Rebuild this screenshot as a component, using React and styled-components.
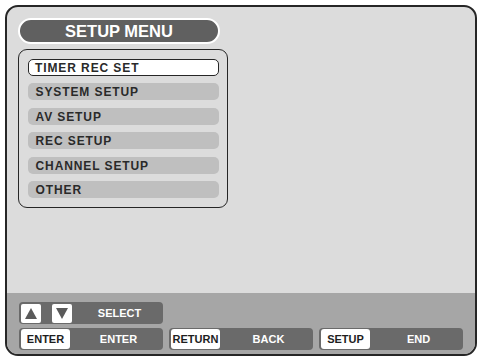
import React from "react";
import styled, { createGlobalStyle } from "styled-components";

const GlobalStyle = createGlobalStyle`
  html, body {
    margin: 0;
    padding: 0;
    background: #ffffff;
    font-family: "Liberation Sans", Arial, sans-serif;
  }
`;

const Screen = styled.div`
  box-sizing: border-box;
  margin: 5px 0 0 5px;
  width: 472px;
  height: 351px;
  border: 2px solid #262626;
  border-radius: 13px;
  background: #dcdcdc;
  display: flex;
  flex-direction: column;
  overflow: hidden;
`;

const Main = styled.div`
  flex: 1;
  padding: 11px;
  display: flex;
  flex-direction: column;
  align-items: flex-start;
`;

const TitlePill = styled.div`
  box-sizing: border-box;
  width: 202px;
  height: 26px;
  border: 2px solid #ffffff;
  border-radius: 13px;
  background: #606060;
  color: #ffffff;
  font-weight: bold;
  font-size: 16.5px;
  display: flex;
  align-items: center;
  justify-content: center;
`;

const MenuBox = styled.div`
  box-sizing: border-box;
  margin-top: 5px;
  width: 210px;
  height: 159px;
  border: 1.5px solid #262626;
  border-radius: 9px;
  padding: 8.5px 8.5px 0 8.5px;
  display: flex;
  flex-direction: column;
  gap: 7.5px;
`;

const Item = styled.div`
  box-sizing: border-box;
  height: 17px;
  border-radius: 5px;
  background: ${(p) => (p.$active ? "#ffffff" : "#bfbfbf")};
  border: ${(p) => (p.$active ? "1.5px solid #262626" : "none")};
  padding-left: ${(p) => (p.$active ? "6.5px" : "8px")};
  padding-top: 1px;
  color: #2a2a2a;
  font-weight: bold;
  font-size: 12px;
  letter-spacing: 0.9px;
  display: flex;
  align-items: center;
`;

const Band = styled.div`
  height: 61px;
  box-sizing: border-box;
  background: #a6a6a6;
  padding: 9px 12px 0 12px;
  display: flex;
  flex-direction: column;
  gap: 4px;
`;

const Row = styled.div`
  display: flex;
  gap: 6px;
`;

const Group = styled.div`
  box-sizing: border-box;
  width: 144px;
  height: 22px;
  border-radius: 4px;
  background: #6a6a6a;
  padding: 1px 2px;
  display: flex;
  align-items: center;
`;

const KeyBox = styled.div`
  box-sizing: border-box;
  width: 49px;
  height: 20px;
  border-radius: 3px;
  background: #ffffff;
  color: #1e1e1e;
  font-weight: bold;
  font-size: 11px;
  display: flex;
  align-items: center;
  justify-content: center;
`;

const ArrowKey = styled.div`
  width: 20px;
  height: 19px;
  border-radius: 2px;
  background: #ffffff;
  display: flex;
  align-items: center;
  justify-content: center;
  margin-right: ${(p) => p.$gap || 0}px;
`;

const Label = styled.div`
  flex: 1;
  padding-left: 6px;
  text-align: center;
  color: #ffffff;
  font-weight: bold;
  font-size: 11px;
`;

function Triangle({ down }) {
  return (
    <svg width="12" height="11" viewBox="0 0 12 11">
      <polygon
        points={down ? "0,0 12,0 6,11" : "6,0 12,11 0,11"}
        fill="#5a5a5a"
      />
    </svg>
  );
}

const items = [
  "TIMER REC SET",
  "SYSTEM SETUP",
  "AV SETUP",
  "REC SETUP",
  "CHANNEL SETUP",
  "OTHER",
];

export default function App() {
  return (
    <>
      <GlobalStyle />
      <Screen>
        <Main>
          <TitlePill>SETUP MENU</TitlePill>
          <MenuBox>
            {items.map((t, i) => (
              <Item key={t} $active={i === 0}>
                {t}
              </Item>
            ))}
          </MenuBox>
        </Main>
        <Band>
          <Row>
            <Group>
              <ArrowKey $gap={11}>
                <Triangle />
              </ArrowKey>
              <ArrowKey>
                <Triangle down />
              </ArrowKey>
              <Label>SELECT</Label>
            </Group>
          </Row>
          <Row>
            <Group>
              <KeyBox>ENTER</KeyBox>
              <Label>ENTER</Label>
            </Group>
            <Group>
              <KeyBox>RETURN</KeyBox>
              <Label>BACK</Label>
            </Group>
            <Group>
              <KeyBox>SETUP</KeyBox>
              <Label>END</Label>
            </Group>
          </Row>
        </Band>
      </Screen>
    </>
  );
}
